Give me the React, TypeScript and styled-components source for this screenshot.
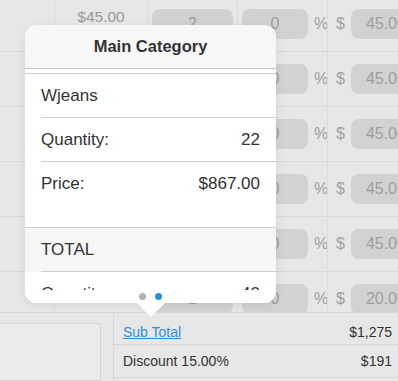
import React from "react";
import styled, { createGlobalStyle } from "styled-components";

const GlobalStyle = createGlobalStyle`
  html, body {
    margin: 0;
    padding: 0;
    background: #e7e7e7;
    font-family: "Liberation Sans", Arial, sans-serif;
    overflow: hidden;
  }
`;

const Screen = styled.div`
  position: relative;
  width: 398px;
  height: 381px;
  overflow: hidden;
  display: flex;
  flex-direction: column;
  background: #e7e7e7;
`;

const TableArea = styled.div`
  height: 312px;
  overflow: hidden;
  flex-shrink: 0;
`;

const TableInner = styled.div`
  margin-top: -3px;
  display: flex;
  flex-direction: column;
`;

const Row = styled.div`
  display: grid;
  grid-template-columns: 55px 93px 90px 90px 1fr;
  height: 55px;
  border-bottom: 1px solid #dadada;
  box-sizing: border-box;
`;

const Cell = styled.div<{ $align?: "left" | "right" | "center" }>`
  display: flex;
  align-items: center;
  justify-content: ${(p) =>
    p.$align === "right" ? "flex-end" : p.$align === "center" ? "center" : "flex-start"};
  border-right: 1px solid #dcdcdc;
  padding: 0 4px;
  box-sizing: border-box;
  gap: 4px;
  font-size: 16px;
  color: #9a9a9a;
  overflow: hidden;
  &:last-child {
    border-right: none;
    padding-right: 0;
  }
`;

const PriceText = styled.span`
  width: 100%;
  text-align: center;
  font-size: 15.5px;
  color: #9a9a9a;
  margin-top: -14px;
`;

const Pill = styled.div<{ $width?: number }>`
  height: 30px;
  border-radius: 8px;
  background: #d2d2d2;
  color: #9e9e9e;
  font-size: 16px;
  display: flex;
  align-items: center;
  justify-content: center;
  flex: ${(p) => (p.$width ? `0 0 ${p.$width}px` : "1")};
  min-width: 0;
  white-space: nowrap;
`;

const Unit = styled.span<{ $lead?: boolean }>`
  font-size: 16px;
  color: #a0a0a0;
  margin: ${(p) => (p.$lead ? "0 2px 0 4px" : "0 0 0 2px")};
`;

const Summary = styled.div`
  flex: 1;
  display: grid;
  grid-template-columns: 113px 1fr;
  border-top: 1px solid #d8d8d8;
`;

const NoteBox = styled.div`
  margin-top: 10px;
  width: 101px;
  border: 1px solid #d6d6d6;
  border-left: none;
  background: #ebebeb;
  box-sizing: border-box;
`;

const SummaryList = styled.div`
  border-left: 1px solid #d6d6d6;
  display: flex;
  flex-direction: column;
`;

const SummaryRow = styled.div<{ $first?: boolean }>`
  height: ${(p) => (p.$first ? "32px" : "33px")};
  border-bottom: 1px solid #d6d6d6;
  display: flex;
  align-items: center;
  justify-content: space-between;
  padding: ${(p) => (p.$first ? "7px 6px 0 9px" : "0 6px 0 9px")};
  font-size: 14px;
  color: #333;
  box-sizing: border-box;
`;

const SubTotalLink = styled.a`
  color: #2a8ed4;
  text-decoration: underline;
`;

const Popover = styled.div`
  position: absolute;
  left: 25px;
  top: 25px;
  width: 251px;
  height: 278px;
  background: #fff;
  border-radius: 12px;
  box-shadow: 0 2px 10px rgba(0, 0, 0, 0.08);
  display: flex;
  flex-direction: column;
  &::after {
    content: "";
    position: absolute;
    left: 112px;
    bottom: -14px;
    border-left: 14px solid transparent;
    border-right: 14px solid transparent;
    border-top: 14px solid #fff;
  }
`;

const PopHeader = styled.div`
  height: 44px;
  flex-shrink: 0;
  background: #f7f7f7;
  border-radius: 12px 12px 0 0;
  border-bottom: 1px solid #c4c4c4;
  display: flex;
  align-items: center;
  justify-content: center;
  font-size: 16.5px;
  font-weight: bold;
  color: #333;
  box-sizing: border-box;
`;

const PopBody = styled.div`
  flex: 1;
  overflow: hidden;
  position: relative;
  border-radius: 0 0 12px 12px;
`;

const SectionStack = styled.div`
  position: relative;
  z-index: 0;
`;

const Section = styled.div<{ $gray?: boolean }>`
  border-top: 1px solid #cfcfcf;
  margin-top: ${(p) => (p.$gray ? "21px" : "4px")};
`;

const ItemRow = styled.div<{ $gray?: boolean; $last?: boolean }>`
  height: 44px;
  margin-left: 16px;
  padding-right: 16px;
  border-bottom: ${(p) => (p.$last ? "none" : "1px solid #cfcfcf")};
  display: flex;
  align-items: center;
  justify-content: space-between;
  font-size: 17px;
  color: #333;
  box-sizing: border-box;
  position: relative;
  &::before {
    content: "";
    position: absolute;
    left: -16px;
    right: 0;
    top: 0;
    bottom: -1px;
    background: ${(p) => (p.$gray ? "#f6f6f6" : "transparent")};
    z-index: -1;
  }
`;

const Dots = styled.div`
  position: absolute;
  left: 0;
  right: 0;
  bottom: 0;
  height: 13px;
  background: #fff;
  display: flex;
  justify-content: center;
  align-items: flex-start;
  gap: 9px;
  padding-top: 3px;
  box-sizing: border-box;
`;

const Dot = styled.span<{ $active?: boolean }>`
  width: 7px;
  height: 7px;
  border-radius: 50%;
  background: ${(p) => (p.$active ? "#2a8ed4" : "#b3b3b3")};
`;

const rows = ["45.00", "45.00", "45.00", "45.00", "45.00", "20.00"];

export default function App() {
  return (
    <>
      <GlobalStyle />
      <Screen>
        <TableArea>
          <TableInner>
            {rows.map((price, i) => (
              <Row key={i}>
                <Cell />
                <Cell $align="center">
                  <PriceText>${price}</PriceText>
                </Cell>
                <Cell>
                  <Pill>2</Pill>
                </Cell>
                <Cell>
                  <Pill $width={66}>0</Pill>
                  <Unit>%</Unit>
                </Cell>
                <Cell>
                  <Unit $lead>$</Unit>
                  <Pill $width={70}>{price}</Pill>
                </Cell>
              </Row>
            ))}
          </TableInner>
        </TableArea>
        <Summary>
          <NoteBox />
          <SummaryList>
            <SummaryRow $first>
              <SubTotalLink>Sub Total</SubTotalLink>
              <span>$1,275</span>
            </SummaryRow>
            <SummaryRow>
              <span>Discount 15.00%</span>
              <span>$191</span>
            </SummaryRow>
          </SummaryList>
        </Summary>

        <Popover>
          <PopHeader>Main Category</PopHeader>
          <PopBody>
            <SectionStack>
              <Section>
                <ItemRow>
                  <span>Wjeans</span>
                </ItemRow>
                <ItemRow>
                  <span>Quantity:</span>
                  <span>22</span>
                </ItemRow>
                <ItemRow $last>
                  <span>Price:</span>
                  <span>$867.00</span>
                </ItemRow>
              </Section>
              <Section $gray>
                <ItemRow $gray>
                  <span>TOTAL</span>
                </ItemRow>
                <ItemRow>
                  <span>Quantity:</span>
                  <span>40</span>
                </ItemRow>
              </Section>
            </SectionStack>
            <Dots>
              <Dot />
              <Dot $active />
            </Dots>
          </PopBody>
        </Popover>
      </Screen>
    </>
  );
}
